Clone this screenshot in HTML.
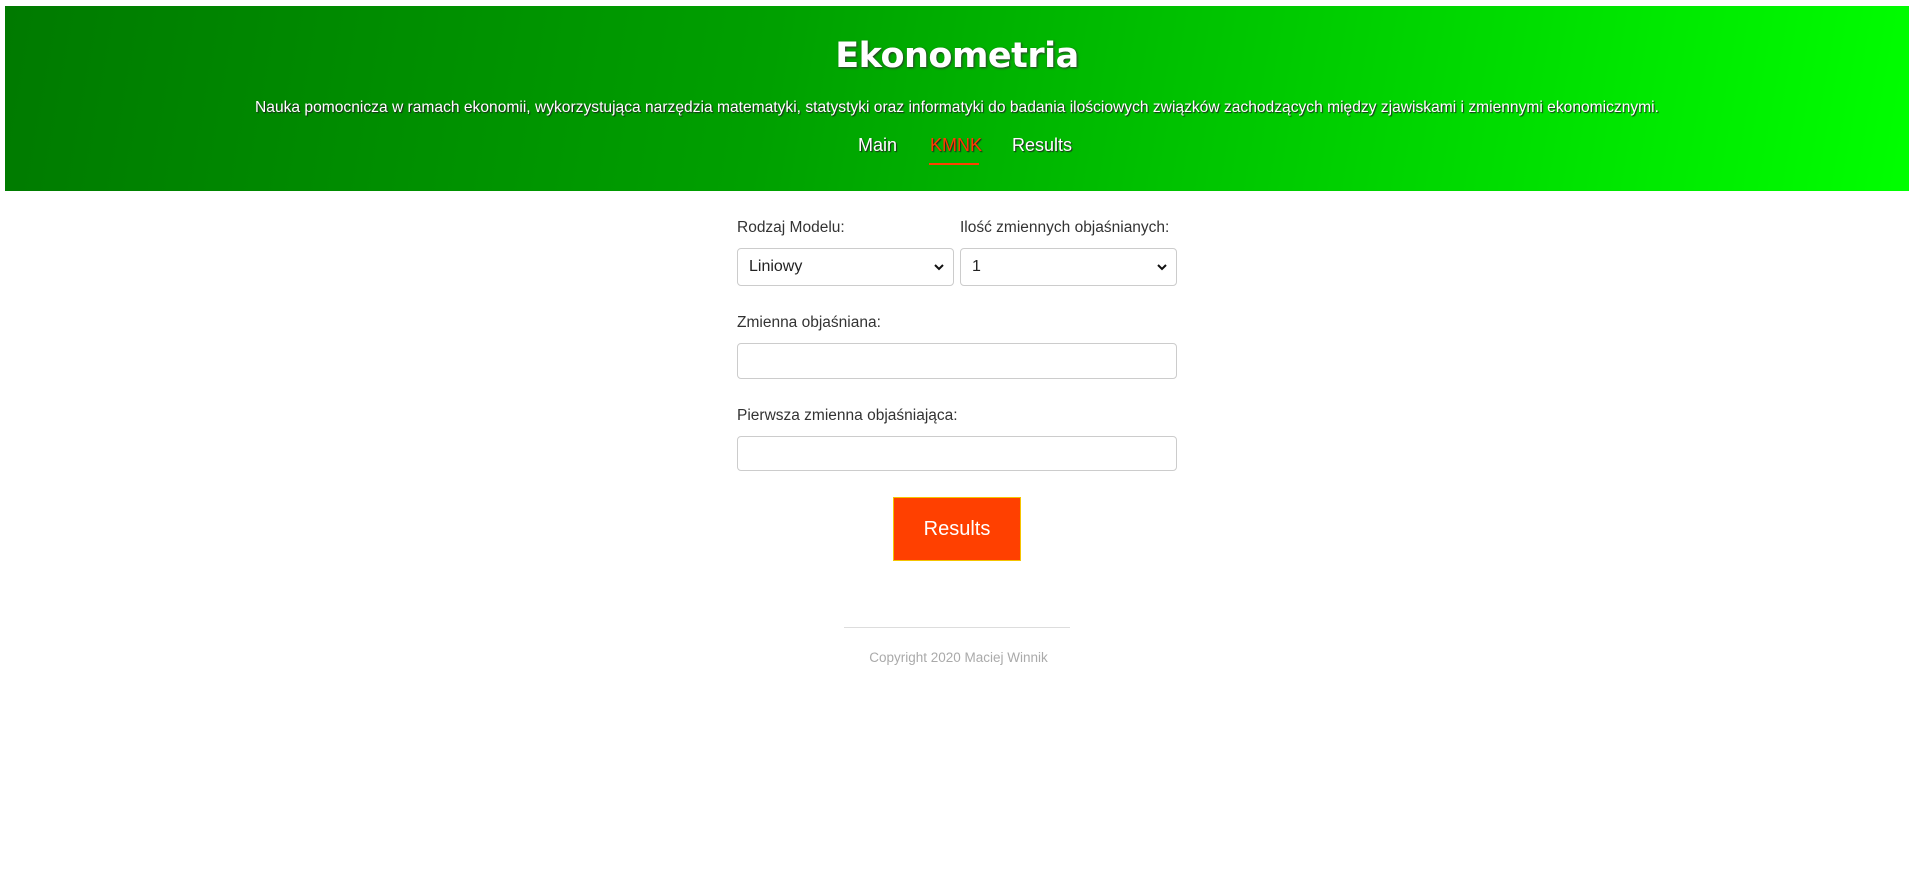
<!DOCTYPE html>
<html><head><meta charset="utf-8"><style>
body{margin:0;background:#fff;font-family:"Liberation Sans",sans-serif;width:1917px;height:884px;overflow:hidden;position:relative}
.hdr{position:absolute;left:5px;top:6px;width:1904px;height:185px;background:linear-gradient(100deg,#007a00,#00a000 40%,#00ff00)}
.t{position:absolute;left:0;right:0;top:30px;text-align:center;color:#fff;font:bold 35px "DejaVu Sans",sans-serif;text-shadow:1px 1px 2px #333;letter-spacing:-0.5px}
.s{position:absolute;left:0;right:0;top:93px;text-align:center;color:#fff;font-size:15.6px;text-shadow:1px 1px 1px #222}
.nav a{position:absolute;top:129px;color:#fff;font-size:18px;text-shadow:1px 1px 1px #222;text-decoration:none}
.ul{position:absolute;left:924px;top:157px;width:50px;height:2px;background:#ff4000}
.lbl{position:absolute;color:#333;font-size:15.5px}
.box{position:absolute;border:1px solid #ccc;border-radius:4px;box-sizing:border-box;background:#fff}
.sel{font-size:16px;color:#222;padding-left:11px;line-height:35px}
.chev{position:absolute;right:8px;top:13px}
.btn{position:absolute;left:893px;top:497px;width:128px;height:64px;box-sizing:border-box;background:#ff4000;border:1px solid #f5c400;color:#fff;font-size:20px;text-align:center;line-height:62px}
.hr{position:absolute;left:844px;top:627px;width:226px;height:1px;background:#ddd}
.c{position:absolute;left:0;right:0;top:650px;text-align:center;color:#aaa;font-size:13.5px}
</style></head><body>
<div class="hdr">
<div class="t">Ekonometria</div>
<div class="s">Nauka pomocnicza w ramach ekonomii, wykorzystująca narzędzia matematyki, statystyki oraz informatyki do badania ilościowych związków zachodzących między zjawiskami i zmiennymi ekonomicznymi.</div>
<div class="nav"><a style="left:853px">Main</a><a style="left:925px;color:#ff3a00">KMNK</a><a style="left:1007px">Results</a></div>
<div class="ul"></div>
</div>
<div class="lbl" style="left:737px;top:219px">Rodzaj Modelu:</div>
<div class="lbl" style="left:960px;top:219px">Ilość zmiennych objaśnianych:</div>
<div class="box sel" style="left:737px;top:248px;width:217px;height:38px">Liniowy<svg class="chev" width="12" height="10" viewBox="0 0 12 10"><path d="M2 3l4 4 4-4" stroke="#111" stroke-width="2" fill="none"/></svg></div>
<div class="box sel" style="left:960px;top:248px;width:217px;height:38px">1<svg class="chev" width="12" height="10" viewBox="0 0 12 10"><path d="M2 3l4 4 4-4" stroke="#111" stroke-width="2" fill="none"/></svg></div>
<div class="lbl" style="left:737px;top:314px">Zmienna objaśniana:</div>
<div class="box" style="left:737px;top:343px;width:440px;height:36px"></div>
<div class="lbl" style="left:737px;top:407px">Pierwsza zmienna objaśniająca:</div>
<div class="box" style="left:737px;top:436px;width:440px;height:35px"></div>
<div class="btn">Results</div>
<div class="hr"></div>
<div class="c">Copyright 2020 Maciej Winnik</div>
</body></html>
